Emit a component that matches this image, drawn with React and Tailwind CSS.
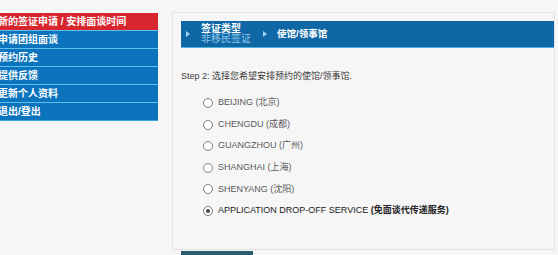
export default function App() {
  const cjk = { fontFamily: '"Liberation Sans", Arial, "Noto Sans CJK SC", sans-serif' };
  const menu = ["申请团组面谈", "预约历史", "提供反馈", "更新个人资料", "退出/登出"];
  const opts = [
    ["BEIJING", "(北京)"],
    ["CHENGDU", "(成都)"],
    ["GUANGZHOU", "(广州)"],
    ["SHANGHAI", "(上海)"],
    ["SHENYANG", "(沈阳)"],
  ];
  return (
    <div className="w-[558px] h-[255px] bg-[#f6f6f6] overflow-hidden flex relative" style={cjk}>
      <div className="w-[158px] pt-[13px] shrink-0 overflow-hidden">
        <div className="h-[17px] bg-[#d8262e] text-white font-bold text-[10px] leading-[17px] -ml-[2px] whitespace-nowrap">
          新的签证申请 / 安排面谈时间
        </div>
        {menu.map((m) => (
          <div key={m} className="h-[18px] bg-[#0b74bd] border-t border-[#5cc0ee] text-white font-bold text-[10px] leading-[17px] -ml-[2px] whitespace-nowrap">
            {m}
          </div>
        ))}
        <div className="h-px bg-[#3aa6e0]"></div>
      </div>
      <div className="ml-[14px] mt-[12px] w-[383px] h-[238px] border border-[#e4e4e4] bg-[#f6f6f6] pl-[8px] pt-[8px]">
        <div className="h-[27px] bg-[#0f68a5] border-b border-[#4fb3e0] flex items-center">
          <span className="ml-[5px] w-0 h-0 border-y-[3.5px] border-y-transparent border-l-[4px] border-l-[#9fd3f5]"></span>
          <div className="ml-[11px] flex flex-col leading-[10px]">
            <span className="text-white font-bold text-[10px]">签证类型</span>
            <span className="text-[#8ec6ec] text-[10px]">非移民签证</span>
          </div>
          <span className="ml-[12px] w-0 h-0 border-y-[3.5px] border-y-transparent border-l-[4px] border-l-[#9fd3f5]"></span>
          <span className="ml-[10px] text-white font-bold text-[9.5px]">使馆/领事馆</span>
        </div>
        <div className="mt-[22px] text-[9px] text-[#3a3a3a] leading-[12px]">
          Step 2: 选择您希望安排预约的使馆/领事馆.
        </div>
        <div className="mt-[15px] pl-[22px] flex flex-col gap-[9.6px]">
          {opts.map(([a, b]) => (
            <div key={a} className="flex items-center h-[12px] text-[9px] text-[#5a5a5a]">
              <span className="w-[10px] h-[10px] rounded-full border border-[#808080] bg-white shrink-0"></span>
              <span className="ml-[5px]">{a} {b}</span>
            </div>
          ))}
          <div className="flex items-center h-[12px] text-[9px] text-[#222]">
            <span className="w-[10px] h-[10px] rounded-full border border-[#808080] bg-white shrink-0 flex items-center justify-center">
              <span className="w-[4px] h-[4px] rounded-full bg-[#444]"></span>
            </span>
            <span className="ml-[5px]">APPLICATION DROP-OFF SERVICE <b>(免面谈代传递服务)</b></span>
          </div>
        </div>
      </div>
      <div className="absolute left-[181px] top-[251px] w-[72px] h-[6px] bg-[#2a5c6e]"></div>
    </div>
  );
}
